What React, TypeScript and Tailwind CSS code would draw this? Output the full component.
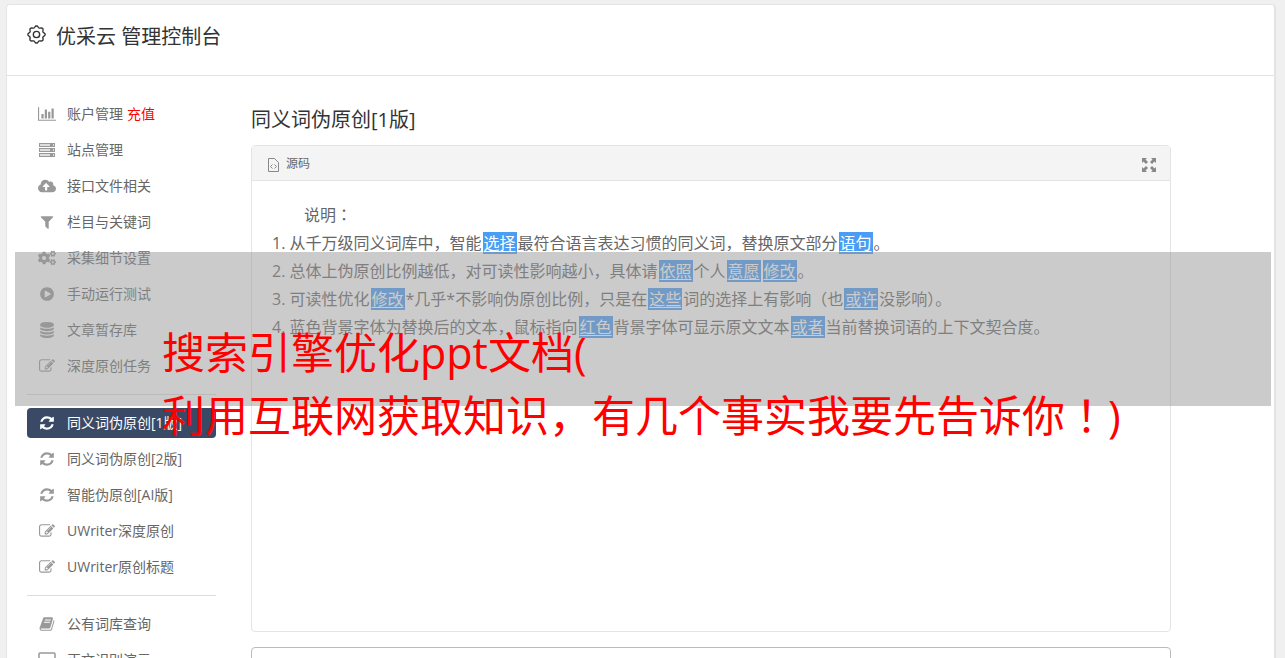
import type { ReactNode } from 'react';
import { FaCloudUploadAlt, FaCogs } from 'react-icons/fa';

interface NavItem {
  label: string;
  icon: ReactNode;
  extra?: string;
  active?: boolean;
}

function Glyph({ d, wide }: { d: string; wide?: boolean }) {
  return (
    <svg viewBox={wide ? '0 0 2048 1792' : '0 0 1792 1792'} fill="currentColor" className={wide ? 'h-4 w-[18px]' : 'size-4'} aria-hidden="true">
      <path d={d} />
    </svg>
  );
}

// Outline of the gear: a circle with eight soft teeth
const gearOutline = Array.from({ length: 96 }, (_, i) => {
  const angle = (i / 96) * Math.PI * 2;
  const radius = 7.4 + 0.8 * Math.cos(angle * 8);
  return `${(9 + radius * Math.cos(angle)).toFixed(2)},${(9 + radius * Math.sin(angle)).toFixed(2)}`;
}).join(' ');

const chartIcon = (
  <Glyph wide d="M640 896v512h-256v-512h256zm384-512v1024h-256v-1024h256zm1024 1152v128h-2048v-1536h128v1408h1920zm-640-896v768h-256v-768h256zm384-384v1152h-256v-1152h256z" />
);

const filterIcon = (
  <Glyph d="M1595 295q17 41-14 70l-493 493v742q0 42-39 59-13 5-25 5-27 0-45-19l-256-256q-19-19-19-45v-486l-493-493q-31-29-14-70 17-39 59-39h1280q42 0 59 39z" />
);

const refreshIcon = (
  <Glyph d="M1639 1056q0 5-1 7-64 268-268 434.5t-478 166.5q-146 0-282.5-55t-243.5-157l-129 129q-19 19-45 19t-45-19-19-45v-448q0-26 19-45t45-19h448q26 0 45 19t19 45-19 45l-137 137q71 66 161 102t187 36q134 0 250-65t186-179q11-17 53-117 8-23 30-23h192q13 0 22.5 9.5t9.5 22.5zm25-800v448q0 26-19 45t-45 19h-448q-26 0-45-19t-19-45 19-45l138-138q-148-137-349-137-134 0-250 65t-186 179q-11 17-53 117-8 23-30 23h-199q-13 0-22.5-9.5t-9.5-22.5v-7q65-268 270-434.5t480-166.5q146 0 284 55.5t245 156.5l130-129q19-19 45-19t45 19 19 45z" />
);

const playIcon = (
  <Glyph d="M896 128q209 0 385.5 103t279.5 279.5 103 385.5-103 385.5-279.5 279.5-385.5 103-385.5-103-279.5-279.5-103-385.5 103-385.5 279.5-279.5 385.5-103zm384 823q32-18 32-55t-32-55l-544-320q-31-19-64-1-32 19-32 56v640q0 37 32 56 16 8 32 8 17 0 32-9z" />
);

const databaseIcon = (
  <Glyph d="M896 768q237 0 443-43t325-127v170q0 69-103 128t-280 93.5-385 34.5-385-34.5-280-93.5-103-128v-170q119 84 325 127t443 43zm0 768q237 0 443-43t325-127v170q0 69-103 128t-280 93.5-385 34.5-385-34.5-280-93.5-103-128v-170q119 84 325 127t443 43zm0-384q237 0 443-43t325-127v170q0 69-103 128t-280 93.5-385 34.5-385-34.5-280-93.5-103-128v-170q119 84 325 127t443 43zm0-1152q208 0 385 34.5t280 93.5 103 128v128q0 69-103 128t-280 93.5-385 34.5-385-34.5-280-93.5-103-128v-128q0-69 103-128t280-93.5 385-34.5z" />
);

const editIcon = (
  <Glyph d="M888 1184l116-116-152-152-116 116v56h96v96h56zm440-720q-16-16-33 1l-350 350q-17 17-1 33t33-1l350-350q17-17 1-33zm80 594v190q0 119-84.5 203.5t-203.5 84.5h-832q-119 0-203.5-84.5t-84.5-203.5v-832q0-119 84.5-203.5t203.5-84.5h832q63 0 117 25 15 7 18 23 3 17-9 29l-49 49q-14 14-32 8-23-6-45-6h-832q-66 0-113 47t-47 113v832q0 66 47 113t113 47h832q66 0 113-47t47-113v-126q0-13 9-22l64-64q15-15 35-7t20 29zm-96-738l288 288-672 672h-288v-288zm444 132l-92 92-288-288 92-92q28-28 68-28t68 28l152 152q28 28 28 68t-28 68z" />
);

const bookIcon = (
  <Glyph d="M1703 478q40 57 18 129l-275 906q-19 64-76.5 107.5t-122.5 43.5h-923q-77 0-148.5-53.5t-99.5-131.5q-24-67-2-127 0-4 3-27t4-37q1-8-3-21.5t-3-19.5q2-11 8-21t16.5-23.5 16.5-23.5q23-38 45-91.5t30-91.5q3-10 .5-30t-.5-28q3-11 17-28t17-23q21-36 42-92t25-90q1-9-2.5-32t.5-28q4-13 22-30.5t22-22.5q19-26 42.5-84.5t27.5-96.5q1-8-3-25.5t-2-26.5q2-8 9-18t18-23 17-21q8-12 16.5-30.5t15-35 16-36 19.5-32 26.5-23.5 36-11.5 47.5 5.5l-1 3q38-9 51-9h761q74 0 114 56t18 130l-274 906q-36 119-71.5 153.5t-128.5 34.5h-869q-27 0-38 15-11 16-1 43 24 70 144 70h923q29 0 56-15.5t35-41.5l300-987q7-22 5-57 38 15 59 43zm-1064 2q-4 13 2 22.5t20 9.5h608q13 0 25.5-9.5t16.5-22.5l21-64q4-13-2-22.5t-20-9.5h-608q-13 0-25.5 9.5t-16.5 22.5zm-83 256q-4 13 2 22.5t20 9.5h608q13 0 25.5-9.5t16.5-22.5l21-64q4-13-2-22.5t-20-9.5h-608q-13 0-25.5 9.5t-16.5 22.5z" />
);

const serverIcon = (
  <svg viewBox="0 0 16 16" className="size-4" aria-hidden="true">
    {[1, 6, 11].map((y) => (
      <g key={y}>
        <rect x="0.5" y={y + 0.5} width="15" height="3" fill="#ddd" stroke="currentColor" />
        <rect x="11" y={y + 1} width="3" height="2" fill="currentColor" />
      </g>
    ))}
  </svg>
);

const screenIcon = (
  <svg viewBox="0 0 18 16" fill="none" stroke="currentColor" className="h-4 w-[18px]" aria-hidden="true">
    <rect x="1" y="1" width="16" height="11" rx="1" strokeWidth="1.5" />
    <path d="M5 15h8" strokeWidth="1.5" />
  </svg>
);

const navGroups: NavItem[][] = [
  [
    { label: '账户管理', icon: chartIcon, extra: '充值' },
    { label: '站点管理', icon: serverIcon },
    { label: '接口文件相关', icon: <FaCloudUploadAlt className="h-4 w-[18px]" /> },
    { label: '栏目与关键词', icon: filterIcon },
    { label: '采集细节设置', icon: <FaCogs className="h-4 w-[18px]" /> },
    { label: '手动运行测试', icon: playIcon },
    { label: '文章暂存库', icon: databaseIcon },
    { label: '深度原创任务', icon: editIcon },
  ],
  [
    { label: '同义词伪原创[1版]', icon: refreshIcon, active: true },
    { label: '同义词伪原创[2版]', icon: refreshIcon },
    { label: '智能伪原创[AI版]', icon: refreshIcon },
    { label: 'UWriter深度原创', icon: editIcon },
    { label: 'UWriter原创标题', icon: editIcon },
  ],
  [
    { label: '公有词库查询', icon: bookIcon },
    { label: '正文识别演示', icon: screenIcon },
  ],
];

function Word({ children }: { children: ReactNode }) {
  return <span className="mx-px bg-[#4a9df4] px-px text-white underline underline-offset-2">{children}</span>;
}

export default function App() {
  return (
    <div className="relative h-screen overflow-hidden bg-[#f0f0f0] pt-1 pr-[9px] pl-1.5 font-['Open_Sans','Noto_Sans_CJK_SC',sans-serif] text-[#666]">
      <div className="min-h-full rounded-t border border-r-2 border-[#e4e4e4] bg-white">
        {/* Header */}
        <header className="flex h-[71px] items-start gap-2.5 border-b border-[#e4e4e4] px-5 pt-[18px] text-[#333]">
          <svg viewBox="0 0 18 18" fill="none" stroke="currentColor" strokeWidth="1.3" className="mt-0.5 size-[19px]" aria-hidden="true">
            <polygon points={gearOutline} />
            <circle cx="9" cy="9" r="3" />
          </svg>
          <h1 className="text-xl leading-7">优采云 管理控制台</h1>
        </header>

        <div className="flex gap-[35px] pt-[23px] pl-5">
          {/* Sidebar */}
          <nav className="w-[189px] shrink-0 text-sm">
            {navGroups.map((group, index) => (
              <ul
                key={index}
                className={`flex flex-col gap-1.5 ${index > 0 ? 'mt-[13px] border-t border-[#ddd] pt-[13px]' : ''}`}
              >
                {group.map((item) => (
                  <li key={item.label}>
                    <a
                      href="#"
                      className={`flex h-[30px] items-center rounded pl-2.5 ${item.active ? 'bg-[#3a4a66] text-white' : ''}`}
                    >
                      <span className={`mr-2.5 flex w-5 justify-center ${item.active ? 'text-white' : 'text-[#999]'}`}>
                        {item.icon}
                      </span>
                      {item.label}
                      {item.extra && <span className="ml-1 text-[#f00]">{item.extra}</span>}
                    </a>
                  </li>
                ))}
              </ul>
            ))}
          </nav>

          {/* Content */}
          <main className="max-w-[920px] flex-1 pt-[7px]">
            <h2 className="text-xl leading-7 text-[#333]">同义词伪原创[1版]</h2>

            <section className="mt-[11px] rounded border border-[#e4e4e4]">
              <div className="flex h-[35px] items-center border-b border-[#e4e4e4] bg-[#f4f4f4] px-3.5 pt-0.5 text-xs">
                <svg viewBox="0 0 14 16" fill="none" stroke="#888" className="mt-0.5 mr-1.5 h-4 w-3.5" aria-hidden="true">
                  <path d="M2.500 1.500h6l4 4v9h-10z" />
                  <path d="M6.500 7.500l-2 2 2 2M8.500 7.500l2 2-2 2" />
                </svg>
                <span>源码</span>
                <button type="button" aria-label="全屏" className="mt-0.5 ml-auto cursor-pointer text-[#888]">
                  <svg viewBox="0 0 14 14" className="size-3.5" aria-hidden="true">
                    <path
                      d="M0 0h5L3.500 1.500 6 4 4 6 1.500 3.500 0 5zM14 0v5l-1.500-1.500L10 6 8 4l2.500-2.500L9 0zM0 14V9l1.500 1.500L4 8l2 2-2.500 2.500L5 14zM14 14H9l1.500-1.500L8 10l2-2 2.500 2.500L14 9z"
                      fill="currentColor"
                    />
                  </svg>
                </button>
              </div>

              <div className="min-h-[450px] px-5 pt-[19px] text-base leading-7">
                <p className="pl-8">
                  说明<span className="font-['Noto_Sans_CJK_TC',sans-serif]">：</span>
                </p>
                <ol className="list-inside list-decimal">
                  <li>
                    从千万级同义词库中，智能<Word>选择</Word>最符合语言表达习惯的同义词，替换原文部分<Word>语句</Word>。
                  </li>
                  <li>
                    总体上伪原创比例越低，对可读性影响越小，具体请<Word>依照</Word>个人<Word>意愿</Word><Word>修改</Word>。
                  </li>
                  <li>
                    可读性优化<Word>修改</Word>*几乎*不影响伪原创比例，只是在<Word>这些</Word>词的选择上有影响（也<Word>或许</Word>没影响）。
                  </li>
                  <li>
                    蓝色背景字体为替换后的文本，鼠标指向<Word>红色</Word>背景字体可显示原文文本<Word>或者</Word>当前替换词语的上下文契合度。
                  </li>
                </ol>
              </div>
            </section>

            <textarea aria-label="原文" className="mt-[15px] block h-40 w-full resize-none rounded border border-[#bbb] p-3" />
          </main>
        </div>
      </div>

      {/* Caption band over the page */}
      <div className="absolute top-[252px] right-3.5 left-[15px] h-[154px] bg-[#979797]/50 pt-[71px] pl-[147px] text-[43px] leading-[60px] whitespace-nowrap text-[#f00]">
        <p>搜索引擎优化ppt文档(</p>
        <p>
          利用互联网获取知识，有几个事实我要先告诉你<span className="font-['Noto_Sans_CJK_TC',sans-serif]">！</span>)
        </p>
      </div>
    </div>
  );
}
